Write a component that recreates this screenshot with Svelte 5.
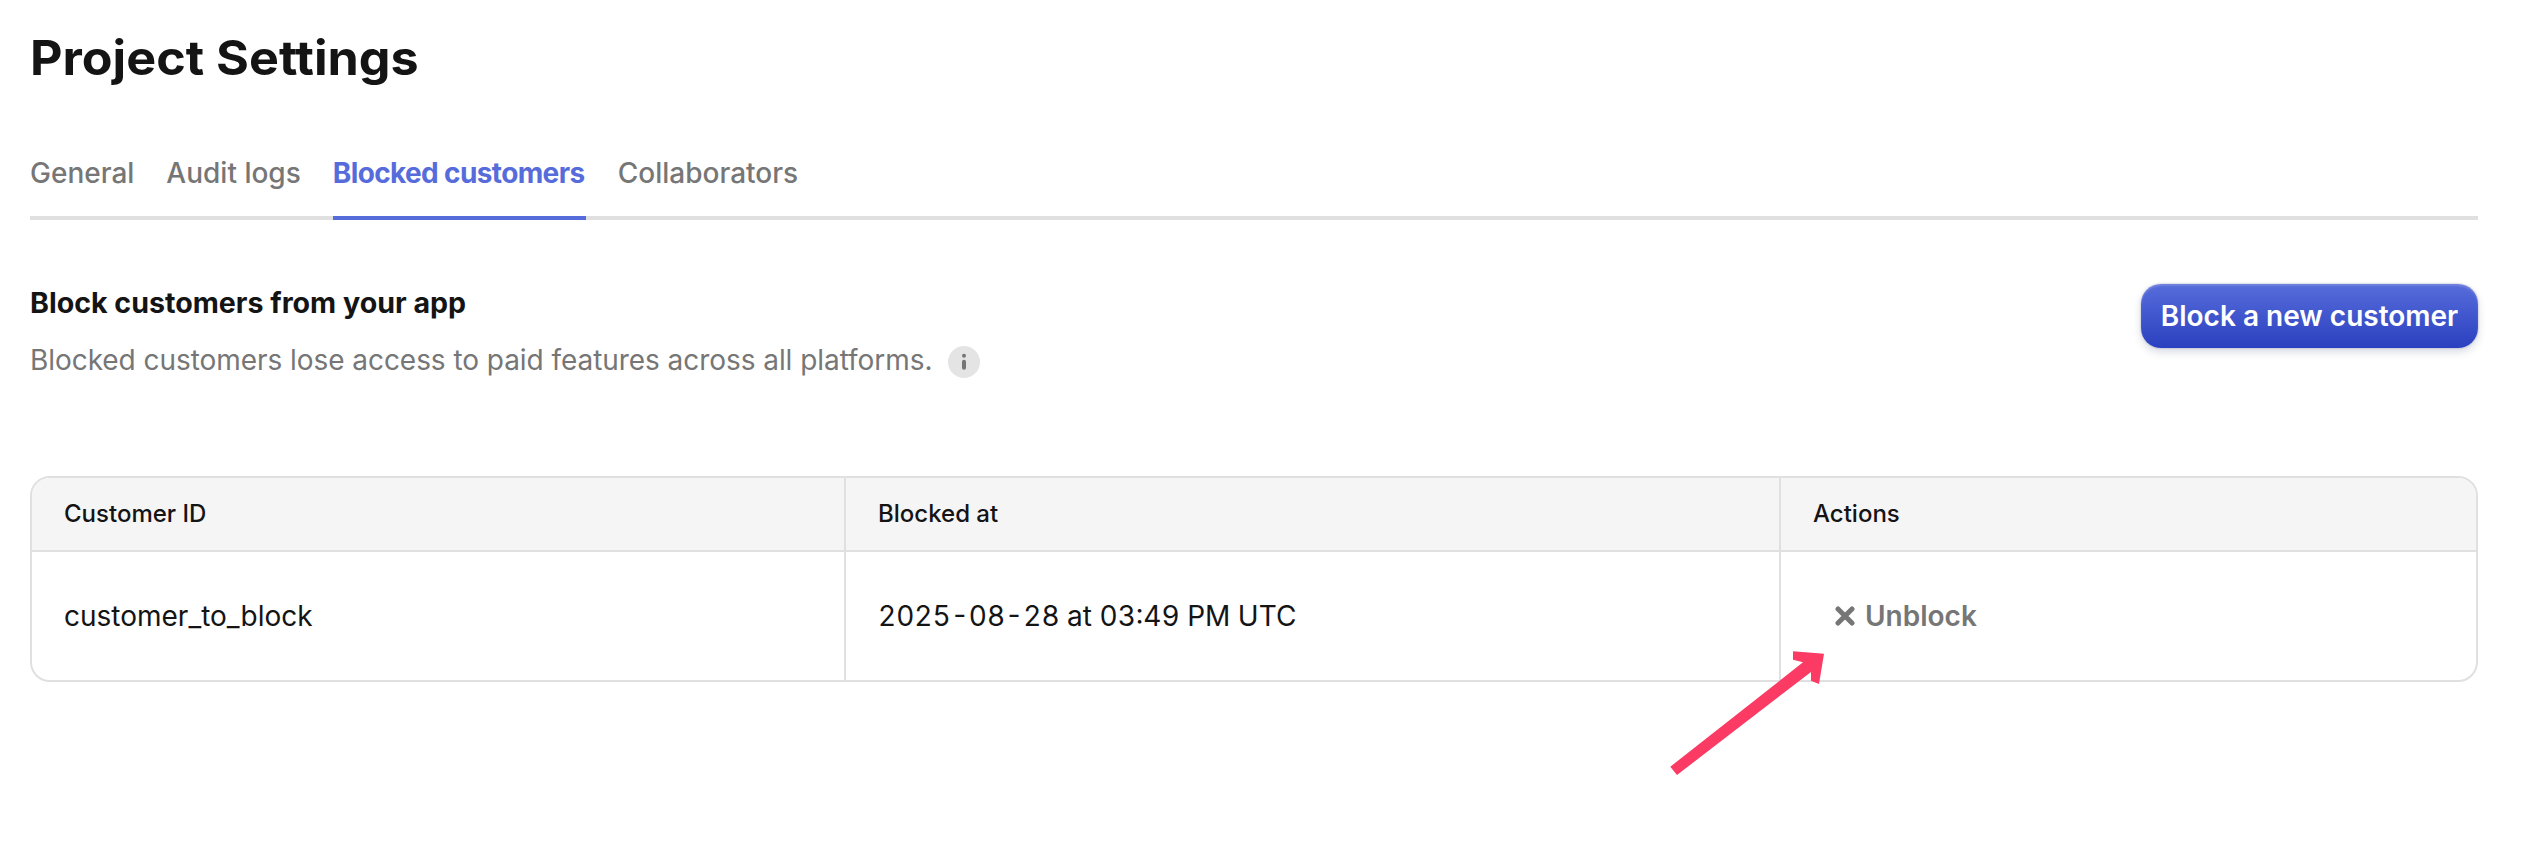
<script>
  const tabs = ['General', 'Audit logs', 'Blocked customers', 'Collaborators'];
  const active = 'Blocked customers';
  const rows = [{ id: 'customer_to_block', blockedAt: '2025-08-28 at 03:49 PM UTC' }];
</script>

<main>
  <h1>Project Settings</h1>
  <nav>
    {#each tabs as tab}
      <a class:active={tab === active} href="#top">{tab}</a>
    {/each}
  </nav>
  <section class="intro">
    <div>
      <h2>Block customers from your app</h2>
      <p>
        <span>Blocked customers lose access to paid features across all platforms.</span>
        <svg class="info" viewBox="0 0 32 32">
          <circle cx="16" cy="16" r="16" fill="#e4e4e4" />
          <circle cx="16" cy="9.8" r="2" fill="#767676" />
          <rect x="14" y="13.8" width="4" height="10" rx="2" fill="#767676" />
        </svg>
      </p>
    </div>
    <button class="primary">Block a new customer</button>
  </section>
  <div class="table">
    <div class="row head">
      <div>Customer ID</div>
      <div>Blocked at</div>
      <div>Actions</div>
    </div>
    {#each rows as row}
      <div class="row body">
        <div>{row.id}</div>
        <div class="date">{row.blockedAt}</div>
        <div>
          <button class="unblock">
            <svg viewBox="0 0 20 20"><path d="M3 3 17 17M17 3 3 17" /></svg>
            Unblock
          </button>
        </div>
      </div>
    {/each}
  </div>
  <svg class="arrow" viewBox="0 0 156 126">
    <path d="M123 .3 154 2.7 149 33 141 29.7V21L7 124 .3 115.7 133 11.3 123 8.7Z" fill="#fb3b64" />
  </svg>
</main>

<style>
  :global(body) { background: #fff; }
  main { position: relative; box-sizing: border-box; width: 2522px; height: 856px; overflow: hidden; padding: 30px 44px 0 30px; font-family: Inter, sans-serif; font-size: 28px; color: #141414; }
  h1, h2, p { margin: 0; white-space: nowrap; }
  h1, h2 { width: max-content; transform-origin: left; }
  h1 { font-size: 48px; line-height: 56px; font-weight: 700; transform: scaleX(1.047); }
  nav { display: flex; gap: 32px; height: 84px; margin-top: 50px; box-shadow: inset 0 -4px #e0e0e0; }
  nav a { color: #767676; text-decoration: none; font-weight: 500; line-height: 74px; white-space: nowrap; }
  nav .active { width: 253px; color: #576cdb; font-weight: 700; letter-spacing: -0.63px; box-shadow: inset 0 -4px #576cdb; }
  .intro { display: flex; justify-content: space-between; align-items: flex-start; margin-top: 64px; height: 192px; }
  h2 { font-size: 28px; line-height: 38px; font-weight: 700; transform: scaleX(1.021); }
  p { display: flex; align-items: center; gap: 16px; margin-top: 18px; line-height: 40px; letter-spacing: -0.055px; color: #767676; }
  .info { width: 32px; height: 32px; margin-top: 4px; }
  button { font: inherit; border: 0; display: flex; align-items: center; }
  .primary { width: 337px; height: 64px; justify-content: center; padding: 0; border-radius: 20px; color: #fff; font-weight: 600; background: linear-gradient(#576cdb, #2a40bf); box-shadow: inset 0 2px 2px rgba(255, 255, 255, 0.16), 0 0 2px rgba(20, 30, 80, 0.35), 0 4px 8px rgba(20, 30, 80, 0.16); }
  .table { box-sizing: border-box; height: 206px; border: 2px solid #e0e0e0; border-radius: 20px; overflow: hidden; }
  .row { display: grid; grid-template-columns: 812px 935px 1fr; }
  .row > div { display: flex; align-items: center; padding-left: 32px; }
  .row > div + div { border-left: 2px solid #e0e0e0; }
  .head { height: 72px; background: #f5f5f5; border-bottom: 2px solid #e0e0e0; font-size: 24px; font-weight: 500; }
  .head > div { padding-bottom: 2px; }
  .body { height: 128px; }
  .date { font-variant-numeric: tabular-nums; }
  .unblock { background: none; color: #767676; font-weight: 600; padding: 0 22px; gap: 10px; }
  .unblock svg { width: 20px; height: 20px; stroke: #767676; stroke-width: 5; stroke-linecap: round; }
  .arrow { position: absolute; left: 1670px; top: 651px; width: 156px; height: 126px; }
</style>
